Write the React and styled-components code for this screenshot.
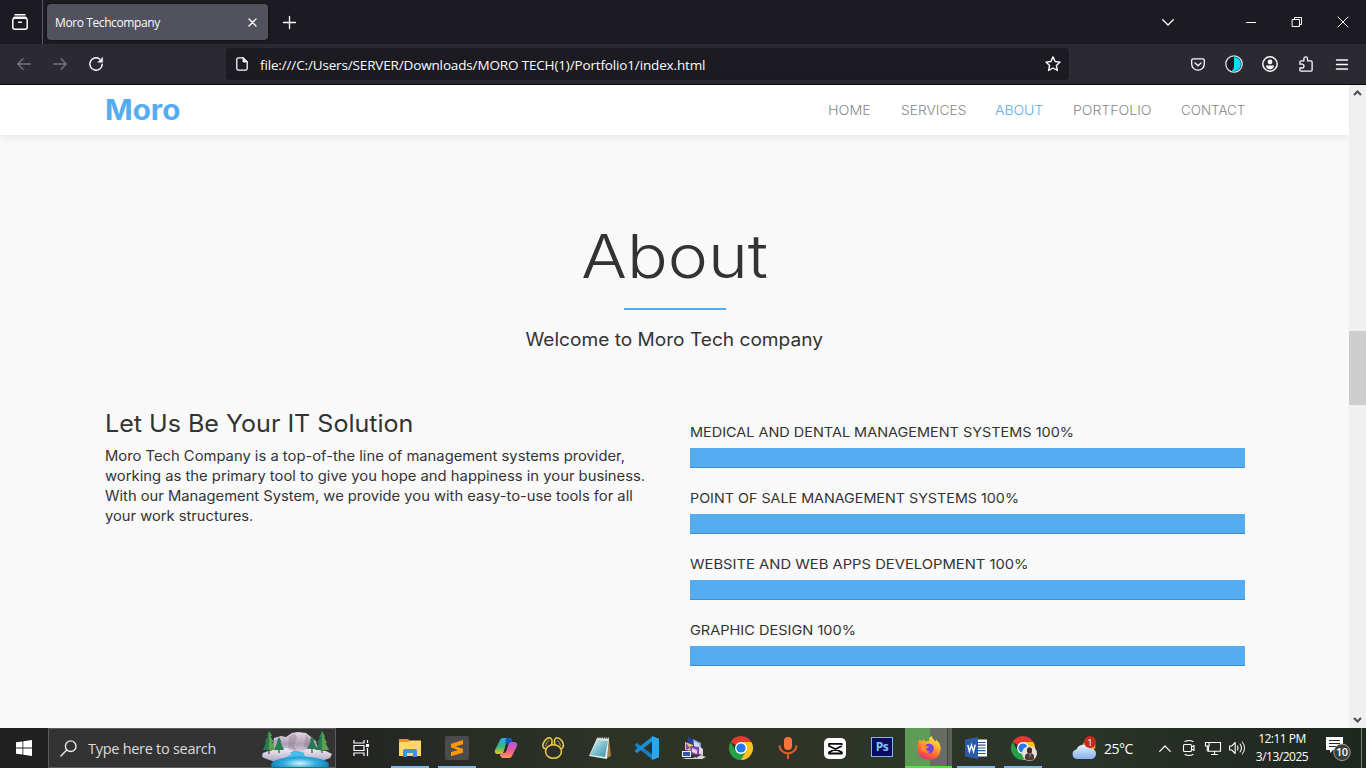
import React from "react";
import styled, { createGlobalStyle } from "styled-components";

const GlobalStyle = createGlobalStyle`
  *, *::before, *::after { box-sizing: border-box; }
  html, body { margin: 0; padding: 0; }
  body { width: 1366px; height: 768px; overflow: hidden; background: #f9f9f9; }
  svg { display: block; flex: none; overflow: visible; }
  h1, h2, p { margin: 0; font-weight: 400; }
`;

const ui = `"Open Sans", "Noto Sans", sans-serif`;
const brand = `Inter, "Liberation Sans", sans-serif`;

const Screen = styled.div`
  display: flex;
  flex-direction: column;
  width: 1366px;
  height: 768px;
  font-family: ${ui};
`;

/* Browser chrome */
const TabStrip = styled.div`
  display: flex;
  align-items: center;
  height: 44px;
  background: #1c1b22;
  color: #fbfbfe;
`;
const TabsButton = styled.div`
  display: flex;
  align-items: center;
  width: 43px;
  height: 44px;
  padding-left: 12px;
  border-right: 1px solid #5b5a63;
`;
const Tab = styled.div`
  display: flex;
  align-items: center;
  justify-content: space-between;
  width: 221px;
  height: 36px;
  margin: 0 15px 0 4px;
  padding: 0 11px 0 8px;
  border-radius: 4px;
  background: #52525e;
  box-shadow: 0 0 3px rgba(0, 0, 0, 0.5);
`;
const TabTitle = styled.span`
  padding-top: 1px;
  font-size: 12px;
  letter-spacing: -0.4px;
  white-space: nowrap;
`;
const WindowControls = styled.div`
  display: flex;
  align-items: center;
  margin-left: auto;
`;
const Slot = styled.div`
  display: flex;
  align-items: center;
  justify-content: center;
  width: ${(p) => p.$w}px;
  flex: none;
`;
const Toolbar = styled.div`
  display: flex;
  align-items: center;
  height: 41px;
  border-bottom: 1px solid #0c0c0d;
  background: #2b2a33;
  color: #fbfbfe;
`;
const NavButtons = styled.div`
  display: flex;
  align-items: center;
  width: 226px;
  padding-left: 6px;
`;
const AddressBar = styled.div`
  display: flex;
  align-items: center;
  width: 843px;
  height: 32px;
  padding: 0 8px 0 10px;
  border-radius: 4px;
  background: #1c1b22;
`;
const Address = styled.span`
  margin-left: 12px;
  margin-right: auto;
  padding-top: 1px;
  font-size: 13.5px;
  letter-spacing: -0.15px;
  white-space: nowrap;
`;
const ToolbarActions = styled.div`
  display: flex;
  align-items: center;
  margin-left: auto;
  padding-right: 6px;
`;

/* Web page */
const Viewport = styled.div`
  display: flex;
  height: 643px;
`;
const Page = styled.div`
  width: 1349px;
  background: #f9f9f9;
  color: #333;
  font-family: ${brand};
`;
const Header = styled.header`
  display: flex;
  align-items: center;
  justify-content: space-between;
  height: 50px;
  padding: 0 104px 0 105px;
  background: #fff;
  box-shadow: 0 0 10px rgba(0, 0, 0, 0.13);
`;
const Logo = styled.span`
  font-size: 28px;
  font-weight: 700;
  color: #55acee;
  transform: scaleX(1.06);
  transform-origin: 0 50%;
`;
const Nav = styled.nav`
  display: flex;
  gap: 30px;
`;
const NavLink = styled.span`
  width: ${(p) => p.$w}px;
  font-size: 13px;
  font-weight: 300;
  white-space: nowrap;
  color: ${(p) => (p.$active ? "#55acee" : "#888")};
  transform: scaleX(${(p) => p.$stretch});
  transform-origin: 0 50%;
`;
const Intro = styled.section`
  display: flex;
  flex-direction: column;
  align-items: center;
  height: 274px;
  padding-top: 86px;
`;
const Title = styled.h1`
  font-size: 60px;
  line-height: 70px;
  font-weight: 300;
  transform: scaleX(1.13);
`;
const Rule = styled.div`
  width: 102px;
  height: 2px;
  margin: 17px 0 17px;
  background: #55acee;
`;
const Subtitle = styled.p`
  font-size: 18px;
  line-height: 26px;
  transform: scaleX(1.061);
`;
const Columns = styled.section`
  display: grid;
  grid-template-columns: 555px 555px;
  column-gap: 30px;
  padding-left: 105px;
`;
const Heading = styled.h2`
  padding-top: 1px;
  margin-bottom: 8px;
  font-size: 24px;
  line-height: 28px;
  transform: scaleX(1.044);
  transform-origin: 0 50%;
`;
const Line = styled.span`
  display: block;
  font-size: 14px;
  line-height: 20px;
  white-space: nowrap;
  transform: scaleX(${(p) => p.$stretch});
  transform-origin: 0 50%;
`;
const Skills = styled.div`
  padding-top: 13px;
`;
const Skill = styled.div`
  height: 66px;
`;
const SkillLabel = styled.p`
  height: 26px;
  font-size: 13.5px;
  line-height: 20px;
  white-space: nowrap;
  transform: scaleX(${(p) => p.$stretch});
  transform-origin: 0 50%;
`;
const Bar = styled.div`
  height: 20px;
  background: #55acee;
  box-shadow: inset 0 -1px 0 #3d8ed0;
`;
const Scrollbar = styled.div`
  display: flex;
  flex-direction: column;
  align-items: center;
  justify-content: space-between;
  width: 17px;
  padding: 5px 0;
  background: #f0f0f0;
`;
const Thumb = styled.div`
  width: 17px;
  height: 74px;
  margin-bottom: 77px;
  background: #cdcdcd;
`;

/* Taskbar */
const Taskbar = styled.div`
  display: flex;
  height: 40px;
  background: linear-gradient(90deg, #202020 0, #222322 330px, #292d25 460px, #2d3427 640px, #2e3529 900px, #2b3227 1100px, #232a23 1250px, #20271f 1366px);
  color: #fff;
`;
const SearchBox = styled.div`
  display: flex;
  align-items: center;
  width: 288px;
  height: 40px;
  padding-left: 11px;
  overflow: hidden;
  border: 1px solid #5c5c5c;
  background: #333;
`;
const SearchText = styled.span`
  width: 173px;
  margin-left: 11px;
  font-size: 14.5px;
  letter-spacing: -0.28px;
  white-space: nowrap;
  color: #dcdcdc;
`;
const TaskSlot = styled.div`
  display: flex;
  flex: none;
  align-items: center;
  justify-content: center;
  width: ${(p) => p.$w || 47.15}px;
  height: 40px;
  background: ${(p) =>
    p.$active
      ? "linear-gradient(#50e33c, #50e33c) 0 100% / 100% 2px no-repeat, linear-gradient(90deg, #5d9c56 0 25px, #686c65 25px 42px, #3f453c 42px 43px, #5a5e57 43px)"
      : p.$running
      ? "linear-gradient(#76b9ed, #76b9ed) 50% 100% / 38px 2px no-repeat"
      : "none"};
`;
const Temperature = styled.span`
  width: 49px;
  margin-left: 7px;
  font-size: 14px;
  letter-spacing: -0.5px;
`;
const Weather = styled.div`
  display: flex;
  align-items: center;
  margin-left: auto;
`;
const Tray = styled.div`
  display: flex;
  align-items: center;
`;
const Clock = styled.div`
  width: 65px;
  padding: 0 0 1px 1px;
  font-size: 12px;
  line-height: 18px;
  letter-spacing: -0.5px;
  text-align: center;
  white-space: nowrap;
`;
const ShowDesktop = styled.div`
  width: 5px;
  height: 40px;
  border-left: 1px solid #7b807a;
`;

/* Line icon: strokes only, drawn in its own pixel grid */
const Stroke = ({ w = 16, h = 16, sw = 1.4, color = "currentColor", children }) => (
  <svg width={w} height={h} viewBox={`0 0 ${w} ${h}`} fill="none" stroke={color} strokeWidth={sw} strokeLinecap="round" strokeLinejoin="round">
    {children}
  </svg>
);

const RecentTabsIcon = () => (
  <Stroke w={16} h={16} sw={1.5}>
    <path d="M3 .8h10M1.8 3.600Q2 3.200 3 3.200h10q1 0 1.200.4" />
    <rect x="0.8" y="4.2" width="14.4" height="11" rx="2" />
    <path d="M6.600 8.300h2.800" />
  </Stroke>
);
const BackIcon = () => (
  <Stroke w={14} h={12} color="#74737b"><path d="M13.400 6H.8M6 .8L.8 6 6 11.200" /></Stroke>
);
const ForwardIcon = () => (
  <Stroke w={14} h={12} color="#74737b"><path d="M.6 6h12.600M8 .8L13.200 6 8 11.200" /></Stroke>
);
const ReloadIcon = () => (
  <Stroke w={14} h={14} sw={1.5}>
    <path d="M13.200 7.300A6.200 6.200 0 1 1 10.600 2" />
    <path d="M13.600.6v4.600H9z" fill="currentColor" strokeWidth="0.5" />
  </Stroke>
);
const FileIcon = () => (
  <Stroke w={12} h={14} sw={1.3}>
    <path d="M7 .8H2.400A1.600 1.600 0 0 0 .8 2.400v9.200a1.600 1.600 0 0 0 1.600 1.600h7.200a1.600 1.600 0 0 0 1.600-1.600V5z" />
    <path d="M7 .8V5h4.200z" fill="currentColor" strokeWidth="0.8" />
  </Stroke>
);
const StarIcon = () => (
  <Stroke w={16} h={16}><path d="M8 .9l2.100 4.600 5 .6-3.700 3.400 1 5L8 12l-4.400 2.500 1-5L.9 6.100l5-.6z" /></Stroke>
);
const PocketIcon = () => (
  <Stroke w={14} h={13} sw={1.3}>
    <path d="M2.200.8h9.600a1.500 1.500 0 0 1 1.500 1.500v3.600a6.300 6.300 0 0 1-12.600 0V2.300A1.500 1.500 0 0 1 2.200.8z" />
    <path d="M4 5l3 2.800L10 5" />
  </Stroke>
);
const ContrastIcon = () => (
  <svg width="18" height="18" viewBox="0 0 18 18">
    <circle cx="9" cy="9" r="8.200" fill="#1c1b22" stroke="#e8e8ec" strokeWidth="1.200" />
    <path d="M9 2a7 7 0 0 1 0 14q-1.500 0-2-.5Q9 14 9 11z" fill="#00ddff" />
  </svg>
);
const AccountIcon = () => (
  <svg width="16" height="16" viewBox="0 0 16 16">
    <circle cx="8" cy="8" r="7.200" fill="none" stroke="currentColor" strokeWidth="1.500" />
    <circle cx="8" cy="5.900" r="2.400" fill="currentColor" />
    <path d="M4 9.500h8q0 3.700-4 3.700t-4-3.700z" fill="currentColor" />
  </svg>
);
const PuzzleIcon = () => (
  <Stroke w={14} h={16} sw={1.3}>
    <path d="M.9 8V6q0-1.200 1.200-1.200h2.800V2.700a1.800 1.800 0 0 1 3.600 0v2.100h3.400q1.200 0 1.200 1.200v8q0 1.200-1.200 1.200H2.100Q.9 15.200 .9 14v-2h2.200a1.900 1.900 0 0 0 0-3.800H.9z" />
  </Stroke>
);
const MenuIcon = () => (
  <Stroke w={12} h={11}><path d="M.5 1h11M.5 5.500h11M.5 10h11" /></Stroke>
);

const WindowsLogo = () => (
  <svg width="16" height="16" viewBox="0 0 16 16" fill="#fff">
    <path d="M0 2.300L6.500 1.400v6.200H0zM7.300 1.300L16 0v7.600H7.300zM0 8.400h6.500v6.200L0 13.700zM7.300 8.400H16V16l-8.700-1.300z" />
  </svg>
);
const WinterScene = () => (
  <svg width="72" height="34" viewBox="0 0 72 34">
    <defs>
      <linearGradient id="peak" x1="0" y1="0" x2="0" y2="1"><stop offset="0" stopColor="#e7dbe2" /><stop offset="0.6" stopColor="#ad9db3" /><stop offset="1" stopColor="#d9d1e0" /></linearGradient>
      <linearGradient id="snow" x1="0" y1="0" x2="0" y2="1"><stop offset="0" stopColor="#fbf6fa" /><stop offset="1" stopColor="#aaa4c4" /></linearGradient>
      <radialGradient id="lake" cx="0.5" cy="0.4" r="0.55"><stop offset="0" stopColor="#d3f4ff" /><stop offset="0.5" stopColor="#35aee0" /><stop offset="1" stopColor="#087bb8" /></radialGradient>
    </defs>
    <path d="M11 20l2-13 7-2 5 1 6-4 6-1 8 1 5 4 5 4 3 11z" fill="url(#peak)" />
    <path d="M28 6l5-4 3 4-3 8 3 6-9-4zM45 3l4 6-2 5 4 5-8-3z" fill="#8f7b8b" opacity="0.4" />
    <path d="M2 22q8-4 15-2l8-3 8 4 10-1 8-4 6 3 8 1 6 3-2 4-11 4H14L3 27q-3-1-1-5z" fill="url(#snow)" />
    <path d="M29 21q10-1 15 1-3 2 2 4l4 2H22l7-4q2-1 0-3z" fill="#45bde9" />
    <ellipse cx="39" cy="34" rx="29" ry="8.500" fill="url(#lake)" />
    <path d="M8 17v6M18 17v5M51 17v5M61 17v5" stroke="#704b47" strokeWidth="1.3" />
    <path d="M8 0L5.500 5H7L3.500 11H5L2 19h12l-3-8h1.500L9.500 5H11zM18 6l-2.500 5h1L13 19h10l-3.500-8h1zM51 5l-2.500 5h1L46 18h10l-3.500-8h1zM61 0l-3 6h1l-3 6h1.500L54 19h14l-3.500-7H66l-3-6h1z" fill="#287b52" />
    <path d="M8 0v19l6 0-3-8h1.500L9.500 5H11zM61 0v19h7l-3.500-7H66l-3-6h1z" fill="#5aa348" />
  </svg>
);
const TaskViewIcon = () => (
  <Stroke w={17} h={16} sw={1.2} color="#fff">
    <path d="M1 0v3h10V0M1 16v-3h10v3M1 5.500h10v5H1zM14.500 0v3M14.500 8v8" strokeLinecap="butt" strokeLinejoin="miter" />
    <rect x="13.5" y="4.5" width="2" height="2" fill="#fff" />
  </Stroke>
);
const ExplorerIcon = () => (
  <svg width="22" height="18" viewBox="0 0 22 18">
    <path d="M0 0h9l2 2h11v6H0z" fill="#e19b0b" />
    <path d="M0 3l9 0 2-1.500h11V17H0z" fill="#ffd766" />
    <path d="M4 18v-6q0-2 2-2h10q2 0 2 2v6h-4v-4H8v4z" fill="#3d93d5" />
  </svg>
);
const SublimeIcon = () => (
  <svg width="24" height="24" viewBox="0 0 24 24">
    <rect width="24" height="24" rx="2" fill="#4c4c4e" />
    <path d="M6 7.800L18 4v4.200l-7.500 2.300L18 12.800v3.900L6 20.300v-4.200l7.200-2.200L6 11.600z" fill="#ff9800" />
  </svg>
);
const CopilotIcon = () => (
  <svg width="22" height="20" viewBox="-1 0 22 20">
    <defs>
      <linearGradient id="cpa" x1="0" y1="0" x2="0" y2="1"><stop offset="0" stopColor="#22aaf0" /><stop offset="0.55" stopColor="#39b77c" /><stop offset="1" stopColor="#f1c61d" /></linearGradient>
      <linearGradient id="cpb" x1="0" y1="0" x2="0" y2="1"><stop offset="0" stopColor="#a85bea" /><stop offset="0.55" stopColor="#ed5a94" /><stop offset="1" stopColor="#ff9859" /></linearGradient>
    </defs>
    <path d="M5 2q.8-2 3-2h6q2 0 2.600 2l.7 3h-4q-2 0-2.700 2L8.500 14q-.7 2-3 2H3q-4 0-3-4z" fill="url(#cpa)" />
    <path d="M11 0h3q2 0 2.600 2l.7 3H13q-2 0-3 2z" fill="#1358b8" />
    <path d="M17 18q-.8 2-3 2H8q-2 0-2.600-2l-.7-3h4q2 0 2.700-2l2.100-7q.7-2 3-2H19q4 0 3 4z" fill="url(#cpb)" />
  </svg>
);
const NavicatIcon = () => (
  <Stroke w={22} h={22} sw={1.6} color="#e8c64d">
    <ellipse cx="11.500" cy="14.500" rx="8" ry="6.800" />
    <path d="M3.500 12Q-1 10 2 5q3-5 6.500-4Q11 3 9.500 8M19.500 12q3.500-3 .5-8-3-4-6-3-2.500 2-1 6.500" />
    <path d="M3.500 9Q4 5 7 3.500M18.500 8.500Q18 5 15.500 3.500" strokeWidth="0.8" />
  </Stroke>
);
const NotepadIcon = () => (
  <svg width="22" height="22" viewBox="0 0 22 22">
    <defs><linearGradient id="np" x1="0" y1="0" x2="1" y2="1"><stop offset="0" stopColor="#dcf5f8" /><stop offset="0.5" stopColor="#7fc0ce" /><stop offset="1" stopColor="#3b91a5" /></linearGradient></defs>
    <path d="M20 2l2 17-4 2z" fill="#a6824c" />
    <path d="M0 19L8 1l12 1-2 20z" fill="#e9f1f2" />
    <path d="M1 18L8 3l11 1-3 16z" fill="url(#np)" />
    <path d="M8 1.500h12" stroke="#c3c9c9" strokeWidth="2" strokeDasharray="1.5 .7" />
  </svg>
);
const VsCodeIcon = () => (
  <svg width="24" height="24" viewBox="0 0 24 24">
    <path d="M0 8.500l2-1.600L18 19v5L0 9.800z" fill="#1580c4" />
    <path d="M0 15.500l2 1.600L18 5V0L0 14.200z" fill="#1b8fd6" />
    <path d="M17 0l7 2.800v18.400L17 24z" fill="#2aa7f0" />
  </svg>
);
const CollageIcon = () => (
  <svg width="24" height="22" viewBox="0 0 24 22">
    <path d="M6 0l6 3v5L5 6z" fill="#27409c" /><path d="M11 2l8 4v12l-6-2z" fill="#8fa0de" />
    <path d="M3 5l8 3v6l-8-1z" fill="#e6d264" /><path d="M4 6l4 5-4 2z" fill="#a23bb1" />
    <path d="M8 9l11 1v9l-10-2z" fill="#7c4aa8" /><path d="M12 4l5 3v3l-5-1z" fill="#d3def0" />
    <path d="M10 11l5 2v4l-5-2zM17 9l4 3v7l-4-2z" fill="#e3d4e6" />
    <rect x="0" y="14" width="9" height="6" fill="#e8ecf5" /><rect x="1" y="15" width="7" height="4" fill="#3457ab" />
    <path d="M0 21h11l7-3 6 2-4 2H4z" fill="#d7d7dc" /><path d="M13 18l7-1-6 4z" fill="#493039" />
  </svg>
);
const ChromeIcon = ({ profile }) => (
  <svg width="24" height="24" viewBox="0 0 24 24">
    <path d="M12 12L1.600 6A12 12 0 0 1 22.400 6z" fill="#e33b2e" />
    <path d="M12 12h0L12 6h10.400A12 12 0 0 1 12 24z" fill="#fcc31e" />
    <path d="M12 12l5.200 3L12 24A12 12 0 0 1 1.600 6l5.200 9z" fill="#24a148" />
    <circle cx="12" cy="12" r="6" fill="#fff" /><circle cx="12" cy="12" r="4.600" fill="#2679e8" />
    {profile && (
      <g><circle cx="18.500" cy="17.500" r="7.500" fill="#e6dfdb" /><ellipse cx="18.500" cy="14.500" rx="2.500" ry="3.200" fill="#3a2a27" /><path d="M14 23q-1-6 4.500-6t4.500 6q-4 3-9 0z" fill="#4a3a38" /><path d="M18 17h2l-1 6z" fill="#9c7768" /></g>
    )}
  </svg>
);
const MicIcon = () => (
  <svg width="20" height="22" viewBox="0 0 20 22" fill="none">
    <rect x="6" y="0" width="8" height="13" rx="4" fill="#ff7139" />
    <path d="M1.500 8.500a8.500 7.800 0 0 0 17 0M10 16v6" stroke="#e2592b" strokeWidth="2.200" />
  </svg>
);
const CapCutIcon = () => (
  <svg width="22" height="21" viewBox="0 0 22 21">
    <rect width="22" height="21" rx="5" fill="#fff" />
    <path d="M17.800 7V5.800H5V8l12.800 6.200v1.300H5v-1.300L17.800 8" fill="none" stroke="#0c0c0c" strokeWidth="1.800" strokeLinejoin="round" />
  </svg>
);
const AppTile = styled.div`
  display: flex;
  align-items: center;
  justify-content: center;
  width: 22px;
  height: 20px;
  margin-bottom: 3px;
  border: 1.500px solid #7ab9f0;
  background: #080b5e;
  color: #83c5fa;
  font: 700 12px/18px ${ui};
  letter-spacing: -0.5px;
`;
const FirefoxIcon = () => (
  <svg width="24" height="24" viewBox="0 0 24 24">
    <defs><linearGradient id="fx" x1="0.8" y1="0" x2="0.3" y2="1"><stop offset="0" stopColor="#fff44f" /><stop offset="0.35" stopColor="#ffb42b" /><stop offset="0.65" stopColor="#ff6a35" /><stop offset="1" stopColor="#ed2c72" /></linearGradient></defs>
    <path d="M1 8q0-3 2-5 .4 1.700 1.600 2.600Q5.500 4 7 3.400 7 5 8.400 5.600 10.500 4.600 12.500 5 11 2.500 14.500 0q1 3.500 4.500 5.800.2-1.400-.2-2.300Q24 7.500 23.700 13.200 22.500 23.600 12 24 1.300 23.300.4 13 .3 10.200 1 8z" fill="url(#fx)" />
    <circle cx="12" cy="12.500" r="4.800" fill="#7542d9" />
    <path d="M4 10q2.600-2 5 0l3 .4q-.5 1.600-3 2 .4 3.200 4.200 3.200-3 2.500-6.700.4Q3.500 13.500 4 10z" fill="#ff8b2f" />
  </svg>
);
const WordIcon = () => (
  <svg width="22" height="22" viewBox="0 0 22 22">
    <rect x="11" y="2.500" width="11" height="17" fill="#fff" />
    <path d="M13 5.500h7.500M13 8.200h7.500M13 11h7.500M13 13.700h7.500M13 16.500h7.500" stroke="#2b579a" strokeWidth="1.200" />
    <path d="M0 2.500L13 0v22L0 19.500z" fill="#2b5aa6" />
    <path d="M2.800 7.800l1.600 6.600L6.500 8l2 6.600L10.200 7.600" fill="none" stroke="#fff" strokeWidth="1.400" />
  </svg>
);
const WeatherIcon = () => (
  <svg width="25" height="24" viewBox="0 0 25 24">
    <defs><linearGradient id="cl" x1="0" y1="0" x2="0" y2="1"><stop offset="0" stopColor="#e4efff" /><stop offset="1" stopColor="#86b1ef" /></linearGradient></defs>
    <circle cx="17" cy="10" r="6.500" fill="#f39c1f" />
    <path d="M5 23a4.800 4.800 0 0 1-.5-9.500A7.500 7.500 0 0 1 18 12.500a5.300 5.300 0 0 1 1.500 10.500z" fill="url(#cl)" />
    <circle cx="18" cy="6" r="6" fill="#c42b1c" />
    <text x="18" y="9.500" textAnchor="middle" fontFamily="Open Sans" fontSize="9.500" fill="#fff">1</text>
  </svg>
);
const MeetIcon = () => (
  <Stroke w={12} h={16} sw={1.1}>
    <path d="M2 1.500Q6-.6 10 1.500M2 14.500q4 2.100 8 0M1.500 4.500h6q1 0 1 1v5q0 1-1 1h-6q-1 0-1-1v-5q0-1 1-1zM8.500 7l2.500-1.500v5L8.500 9" />
  </Stroke>
);
const NetworkIcon = () => (
  <Stroke w={16} h={13} sw={1.1}>
    <path d="M5 .5h10.500v8.800H3.500V5M9.500 9.300v3M6.500 12.500h6M.5.500h3.600V4H.5zM2.300 4v5" strokeLinejoin="miter" />
  </Stroke>
);
const SpeakerIcon = () => (
  <Stroke w={17} h={14} sw={1.1}>
    <path d="M.6 5h2.200l3.400-3.500v11L2.800 9H.6zM8.500 5q1.300 2 0 4M11 3q3 4 0 8" />
    <path d="M13.300 1q4.500 6 0 12" strokeOpacity="0.85" />
  </Stroke>
);
const NotificationIcon = () => (
  <svg width="26" height="25" viewBox="0 0 26 25">
    <path d="M1 1h17v13H8l-3 3v-3H1z" fill="#fff" />
    <path d="M4 4.500h11M4 7.500h11M4 10.500h8" stroke="#222822" strokeWidth="1.100" />
    <circle cx="17" cy="16.300" r="8.200" fill="#3b403b" stroke="#a2a5a2" />
    <text x="16.800" y="20.200" textAnchor="middle" fontFamily="Open Sans" fontSize="11" fontWeight="600" fill="#fff" letterSpacing="-0.500">10</text>
  </svg>
);

const links = [
  ["HOME", 43, 1.1],
  ["SERVICES", 64.5, 1.065],
  ["ABOUT", 48, 1.075],
  ["PORTFOLIO", 78, 1.08],
  ["CONTACT", 64, 1.03],
];
const paragraph = [
  ["Moro Tech Company is a top-of-the line of management systems provider,", 1.055],
  ["working as the primary tool to give you hope and happiness in your business.", 1.057],
  ["With our Management System, we provide you with easy-to-use tools for all", 1.052],
  ["your work structures.", 1.05],
];
const skills = [
  ["MEDICAL AND DENTAL MANAGEMENT SYSTEMS 100%", 1.07],
  ["POINT OF SALE MANAGEMENT SYSTEMS 100%", 1.06],
  ["WEBSITE AND WEB APPS DEVELOPMENT 100%", 1.094],
  ["GRAPHIC DESIGN 100%", 1.078],
];

export default function App() {
  return (
    <Screen>
      <GlobalStyle />
      <TabStrip>
        <TabsButton><RecentTabsIcon /></TabsButton>
        <Tab>
          <TabTitle>Moro Techcompany</TabTitle>
          <Stroke w={9} h={9}><path d="M1 1l7 7M8 1L1 8" /></Stroke>
        </Tab>
        <Stroke w={13} h={13} sw={1.3}><path d="M6.500.5v12M.5 6.500h12" /></Stroke>
        <WindowControls>
          <Slot $w={120}><Stroke w={12} h={7} sw={1.3}><path d="M.7.700L6 6 11.300.7" /></Stroke></Slot>
          <Slot $w={46}><Stroke w={10} h={1} sw={1}><path d="M0 .5h10" strokeLinecap="butt" /></Stroke></Slot>
          <Slot $w={46}><Stroke w={10} h={10} sw={1}><path d="M.5 2.500h7v7h-7zM2.500 2.500v-2h7v7h-2" strokeLinejoin="miter" /></Stroke></Slot>
          <Slot $w={46}><Stroke w={10} h={10} sw={1}><path d="M0 0l10 10M10 0L0 10" /></Stroke></Slot>
        </WindowControls>
      </TabStrip>
      <Toolbar>
        <NavButtons>
          <Slot $w={36}><BackIcon /></Slot>
          <Slot $w={36}><ForwardIcon /></Slot>
          <Slot $w={36}><ReloadIcon /></Slot>
        </NavButtons>
        <AddressBar>
          <FileIcon />
          <Address>file:///C:/Users/SERVER/Downloads/MORO TECH(1)/Portfolio1/index.html</Address>
          <StarIcon />
        </AddressBar>
        <ToolbarActions>
          <Slot $w={36}><PocketIcon /></Slot>
          <Slot $w={36}><ContrastIcon /></Slot>
          <Slot $w={36}><AccountIcon /></Slot>
          <Slot $w={36}><PuzzleIcon /></Slot>
          <Slot $w={36}><MenuIcon /></Slot>
        </ToolbarActions>
      </Toolbar>

      <Viewport>
        <Page>
          <Header>
            <Logo>Moro</Logo>
            <Nav>
              {links.map(([label, w, stretch]) => (
                <NavLink key={label} $w={w} $stretch={stretch} $active={label === "ABOUT"}>{label}</NavLink>
              ))}
            </Nav>
          </Header>
          <Intro>
            <Title>About</Title>
            <Rule />
            <Subtitle>Welcome to Moro Tech company</Subtitle>
          </Intro>
          <Columns>
            <div>
              <Heading>Let Us Be Your IT Solution</Heading>
              <p>
                {paragraph.map(([text, stretch]) => (
                  <Line key={text} $stretch={stretch}>{text}</Line>
                ))}
              </p>
            </div>
            <Skills>
              {skills.map(([label, stretch]) => (
                <Skill key={label}>
                  <SkillLabel $stretch={stretch}>{label}</SkillLabel>
                  <Bar />
                </Skill>
              ))}
            </Skills>
          </Columns>
        </Page>
        <Scrollbar>
          <Stroke w={9} h={6} sw={2.2} color="#505050"><path d="M1 5l3.500-3.500L8 5" strokeLinecap="butt" strokeLinejoin="miter" /></Stroke>
          <Thumb />
          <Stroke w={9} h={6} sw={2.2} color="#505050"><path d="M1 1l3.500 3.500L8 1" strokeLinecap="butt" strokeLinejoin="miter" /></Stroke>
        </Scrollbar>
      </Viewport>

      <Taskbar>
        <TaskSlot $w={48}><WindowsLogo /></TaskSlot>
        <SearchBox>
          <Stroke w={17} h={17} sw={1.4} color="#e8e8e8"><circle cx="10.7" cy="6.2" r="5.3" /><path d="M6.800 10L.8 16" /></Stroke>
          <SearchText>Type here to search</SearchText>
          <WinterScene />
        </SearchBox>
        <TaskSlot $w={50}><TaskViewIcon /></TaskSlot>
        <TaskSlot $running><ExplorerIcon /></TaskSlot>
        <TaskSlot $w={48} $running><SublimeIcon /></TaskSlot>
        <TaskSlot $w={48}><CopilotIcon /></TaskSlot>
        <TaskSlot><NavicatIcon /></TaskSlot>
        <TaskSlot><NotepadIcon /></TaskSlot>
        <TaskSlot><VsCodeIcon /></TaskSlot>
        <TaskSlot><CollageIcon /></TaskSlot>
        <TaskSlot $w={47}><ChromeIcon /></TaskSlot>
        <TaskSlot $w={47}><MicIcon /></TaskSlot>
        <TaskSlot $w={47}><CapCutIcon /></TaskSlot>
        <TaskSlot $w={46.5}><AppTile>Ps</AppTile></TaskSlot>
        <TaskSlot $w={47} $active><FirefoxIcon /></TaskSlot>
        <TaskSlot $running><WordIcon /></TaskSlot>
        <TaskSlot $running><ChromeIcon profile /></TaskSlot>
        <Weather>
          <WeatherIcon />
          <Temperature>25°C</Temperature>
        </Weather>
        <Tray>
          <Slot $w={24}><Stroke w={12} h={7} sw={1.2}><path d="M.7 6.300L6 1l5.300 5.300" /></Stroke></Slot>
          <Slot $w={24}><MeetIcon /></Slot>
          <Slot $w={24}><NetworkIcon /></Slot>
          <Slot $w={24}><SpeakerIcon /></Slot>
          <Clock>12:11 PM<br />3/13/2025</Clock>
          <Slot $w={47}><NotificationIcon /></Slot>
        </Tray>
        <ShowDesktop />
      </Taskbar>
    </Screen>
  );
}
